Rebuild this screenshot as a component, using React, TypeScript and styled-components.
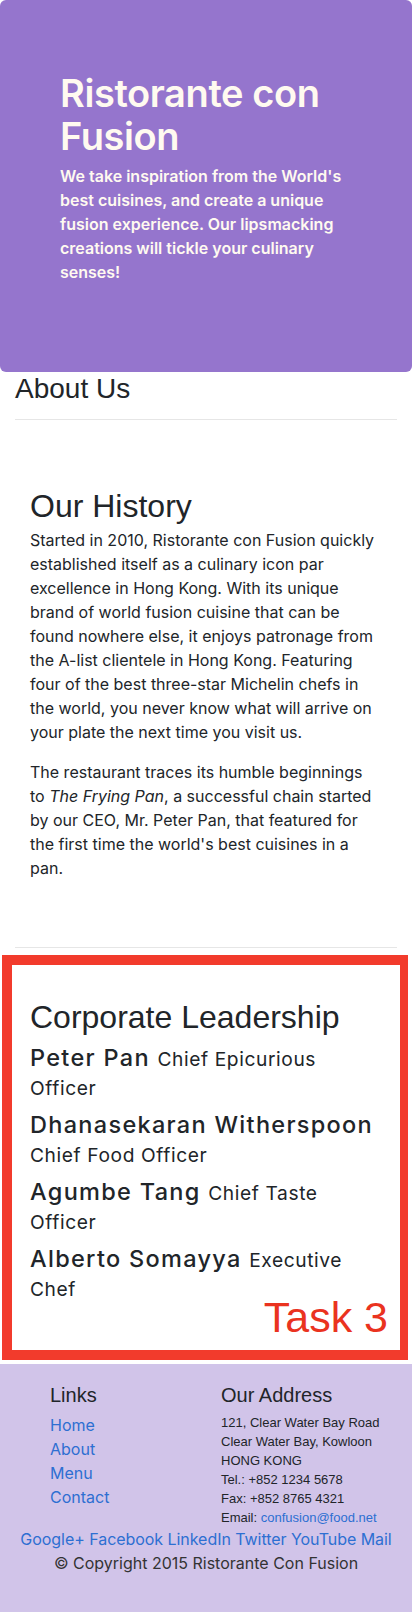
import React from 'react';
import styled, { createGlobalStyle } from 'styled-components';

const headingFont = `"Liberation Sans", "Helvetica Neue", Arial, sans-serif`;

const GlobalStyle = createGlobalStyle`
  html, body { margin: 0; padding: 0; background: #ffffff; }
  body {
    font-family: Inter, "Helvetica Neue", Arial, sans-serif;
    color: #212529;
    font-size: 16px;
    line-height: 24px;
    -webkit-font-smoothing: antialiased;
  }
  * { box-sizing: border-box; }
`;

const Jumbotron = styled.header`
  background: #9575cd;
  color: #fffaf0;
  border-radius: 6px;
  padding: 72px 60px 88px;
`;

const JumboTitle = styled.h1`
  margin: 0 0 6px;
  font-size: 38px;
  line-height: 43px;
  font-weight: 600;
  letter-spacing: -0.4px;
`;

const JumboText = styled.p`
  margin: 0;
  font-size: 16px;
  line-height: 24px;
  font-weight: 600;
`;

const Container = styled.div`
  padding: 0 15px;
`;

const PageTitle = styled.h2`
  margin: 0;
  font-family: ${headingFont};
  font-size: 28px;
  line-height: 34px;
  font-weight: 400;
  color: #212529;
`;

const Divider = styled.hr<{ $top: number }>`
  border: 0;
  border-top: 1px solid #e6e6e6;
  margin: ${(p) => p.$top}px 0 0;
  height: 0;
`;

const HistorySection = styled.section`
  padding: 67px 19px 51px 15px;
`;

const SectionTitle = styled.h2`
  margin: 0 0 3px;
  font-family: ${headingFont};
  font-size: 32px;
  line-height: 38px;
  font-weight: 400;
  color: #212529;
`;

const Paragraph = styled.p`
  margin: 0 0 16px;
  font-size: 16px;
  line-height: 24px;
`;

const Annotated = styled.section`
  position: relative;
  margin: 7px 4px 0 2px;
  border: 10px solid #f23b2c;
  border-right-width: 8px;
  padding: 33px 22px 39px 18px;
`;

const LeaderTitle = styled(SectionTitle)`
  margin-bottom: 7px;
`;

const Member = styled.h3`
  margin: 0 0 9px;
  font-size: 23.5px;
  line-height: 29px;
  font-weight: 500;
  letter-spacing: 1.3px;
  color: #212529;
`;

const Role = styled.small`
  font-size: 19.2px;
  line-height: 1;
  font-weight: 400;
  letter-spacing: 0.6px;
`;

const TaskLabel = styled.span`
  position: absolute;
  right: 12px;
  bottom: 11px;
  font-family: ${headingFont};
  font-size: 43px;
  line-height: 43px;
  color: #ea331f;
  font-weight: 400;
`;

const Footer = styled.footer`
  margin-top: 4px;
  background: #d1c4e9;
  padding: 19px 0 37px;
`;

const FooterRow = styled.div`
  display: grid;
  grid-template-columns: 171px 1fr;
  padding: 0 15px 0 50px;
`;

const FooterHeading = styled.h5`
  margin: 0 0 6px;
  font-family: ${headingFont};
  font-size: 20px;
  line-height: 24px;
  font-weight: 400;
  color: #212529;
`;

const LinkList = styled.ul`
  list-style: none;
  margin: 2px 0 0;
  padding: 0;
`;

const LinkItem = styled.li`
  font-size: 16px;
  line-height: 24px;
`;

const FooterLink = styled.a`
  color: #2d6fd2;
  text-decoration: none;
`;

const Address = styled.address`
  font-style: normal;
  font-family: ${headingFont};
  font-size: 13px;
  line-height: 19px;
  color: #212529;
`;

const Social = styled.div`
  text-align: center;
  font-size: 16px;
  line-height: 24px;
  letter-spacing: -0.05px;
`;

const Copyright = styled.p`
  margin: 0;
  text-align: center;
  font-size: 16px;
  line-height: 24px;
  color: #333333;
`;

const leaders = [
  { name: 'Peter Pan', role: 'Chief Epicurious Officer' },
  { name: 'Dhanasekaran Witherspoon', role: 'Chief Food Officer' },
  { name: 'Agumbe Tang', role: 'Chief Taste Officer' },
  { name: 'Alberto Somayya', role: 'Executive Chef' },
];

const socials = ['Google+', 'Facebook', 'LinkedIn', 'Twitter', 'YouTube', 'Mail'];

export default function App() {
  return (
    <>
      <GlobalStyle />
      <Jumbotron>
        <JumboTitle>Ristorante con Fusion</JumboTitle>
        <JumboText>
          We take inspiration from the World's best cuisines, and create a unique fusion
          experience. Our lipsmacking creations will tickle your culinary senses!
        </JumboText>
      </Jumbotron>
      <Container>
        <PageTitle>About Us</PageTitle>
        <Divider $top={13} />
        <HistorySection>
          <SectionTitle>Our History</SectionTitle>
          <Paragraph>
            Started in 2010, Ristorante con Fusion quickly established itself as a culinary
            icon par excellence in Hong Kong. With its unique brand of world fusion cuisine
            that can be found nowhere else, it enjoys patronage from the A-list clientele in
            Hong Kong. Featuring four of the best three-star Michelin chefs in the world, you
            never know what will arrive on your plate the next time you visit us.
          </Paragraph>
          <Paragraph>
            The restaurant traces its humble beginnings to <em>The Frying Pan</em>, a
            successful chain started by our CEO, Mr. Peter Pan, that featured for the first
            time the world's best cuisines in a pan.
          </Paragraph>
        </HistorySection>
        <Divider $top={0} />
      </Container>
      <Annotated>
        <LeaderTitle>Corporate Leadership</LeaderTitle>
        {leaders.map((l) => (
          <Member key={l.name}>
            {l.name} <Role>{l.role}</Role>
          </Member>
        ))}
        <TaskLabel>Task 3</TaskLabel>
      </Annotated>
      <Footer>
        <FooterRow>
          <div>
            <FooterHeading>Links</FooterHeading>
            <LinkList>
              {['Home', 'About', 'Menu', 'Contact'].map((t) => (
                <LinkItem key={t}>
                  <FooterLink href="#">{t}</FooterLink>
                </LinkItem>
              ))}
            </LinkList>
          </div>
          <div>
            <FooterHeading>Our Address</FooterHeading>
            <Address>
              121, Clear Water Bay Road
              <br />
              Clear Water Bay, Kowloon
              <br />
              HONG KONG
              <br />
              Tel.: +852 1234 5678
              <br />
              Fax: +852 8765 4321
              <br />
              Email: <FooterLink href="#">confusion@food.net</FooterLink>
            </Address>
          </div>
        </FooterRow>
        <Social>
          {socials.map((s, i) => (
            <React.Fragment key={s}>
              {i > 0 && ' '}
              <FooterLink href="#">{s}</FooterLink>
            </React.Fragment>
          ))}
        </Social>
        <Copyright>© Copyright 2015 Ristorante Con Fusion</Copyright>
      </Footer>
    </>
  );
}
